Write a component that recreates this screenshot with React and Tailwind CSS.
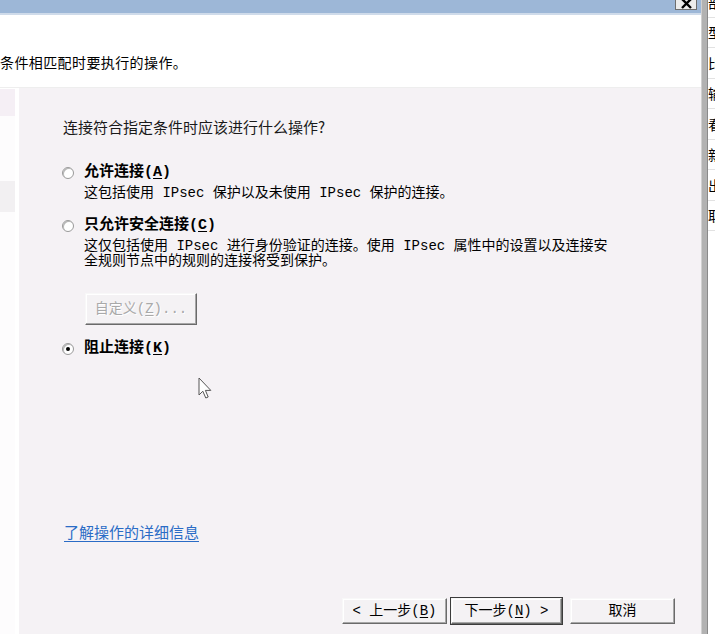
import React from "react";

const MONO = "font-['Liberation_Mono','Noto_Sans_CJK_SC',monospace]";
const SANS = "font-['Noto_Sans_CJK_SC','Noto_Sans',sans-serif]";

function Radio({ checked }) {
  return (
    <span className="mt-[4px] w-[12px] h-[12px] shrink-0 rounded-full bg-white border border-[#9a9a9a] shadow-[inset_1px_1px_0_#b8b8b8] flex items-center justify-center">
      {checked && <span className="w-[4px] h-[4px] rounded-full bg-black" />}
    </span>
  );
}

function Key({ k }) {
  return (
    <>
      (<span className="underline underline-offset-2">{k}</span>)
    </>
  );
}

function WinButton({ children, def, disabled, w }) {
  return (
    <div className={def ? "border border-[#3c3c3c]" : "border border-transparent"}>
      <div
        className={
          (w || "w-[105px]") +
          " h-[26px] flex items-center justify-center bg-[#f4f2f4] border border-t-[#f8f8f8] border-l-[#f8f8f8] border-b-[#6a6a6a] border-r-[#6a6a6a] shadow-[inset_-1px_-1px_0_#a7a7a7,inset_1px_1px_0_#ffffff] text-[14px] leading-[18px] whitespace-nowrap " +
          MONO +
          (disabled ? " text-[#a9a9a9] [text-shadow:1px_1px_0_#ffffff]" : " text-black")
        }
      >
        {children}
      </div>
    </div>
  );
}

export default function App() {
  const frags = ["部", "型", "比", "输", "看", "新", "出", "取"];
  return (
    <div className="w-[715px] h-[634px] overflow-hidden flex bg-white">
      {/* main window */}
      <div className="w-[701px] h-full flex flex-col">
        {/* title bar */}
        <div className="h-[13px] bg-[#9db7d7] border-b-2 border-[#cfdbea] box-content flex justify-end pr-[4px]">
          <div className="w-[22px] h-[10px] bg-[#ececec] border border-t-0 border-[#6e6e6e] flex justify-center overflow-hidden">
            <svg width="13" height="10" viewBox="0 0 13 10" className="-mt-[1px]">
              <path d="M2 0 L11 9 M11 0 L2 9" stroke="#000" strokeWidth="2.4" />
            </svg>
          </div>
        </div>
        {/* header */}
        <div className="h-[73px] shrink-0 bg-white border-b border-[#eeeeee] pt-[37px]">
          <p className={"text-[14px] leading-[20px] tracking-[0.4px] text-black whitespace-nowrap " + SANS}>
            条件相匹配时要执行的操作。
          </p>
        </div>
        {/* content */}
        <div className="flex-1 flex bg-white">
          {/* steps panel */}
          <div className="w-[15px] flex flex-col pt-[1px]">
            <div className="h-[27px] bg-[#f5eff5]" />
            <div className="h-[65px] bg-[#fdfcfd]" />
            <div className="h-[31px] bg-[#f2f0f2]" />
            <div className="flex-1 bg-[#fdfcfd]" />
          </div>
          <div className="w-[4px]" />
          {/* main panel */}
          <div className="flex-1 relative bg-[#f5f2f5] pl-[43px] pt-[29px] flex flex-col">
            <p className={"ml-[1px] text-[15px] leading-[20px] text-[#1a1a1a] whitespace-nowrap " + SANS}>
              连接符合指定条件时应该进行什么操作?
            </p>

            {/* option 1 */}
            <div className="mt-[26px] flex items-start gap-[10px]">
              <Radio />
              <div className="flex flex-col">
                <span className={"text-[15px] leading-[20px] font-bold text-black whitespace-nowrap " + MONO}>
                  允许连接<Key k="A" />
                </span>
                <span className={"mt-[1px] text-[14px] leading-[18px] text-black whitespace-nowrap " + MONO}>
                  这包括使用 IPsec 保护以及未使用 IPsec 保护的连接。
                </span>
              </div>
            </div>

            {/* option 2 */}
            <div className="mt-[14px] flex items-start gap-[10px]">
              <Radio />
              <div className="flex flex-col">
                <span className={"text-[15px] leading-[20px] font-bold text-black whitespace-nowrap " + MONO}>
                  只允许安全连接<Key k="C" />
                </span>
                <span className={"mt-[3px] text-[14px] leading-[15px] text-black whitespace-nowrap " + MONO}>
                  这仅包括使用 IPsec 进行身份验证的连接。使用 IPsec 属性中的设置以及连接安
                  <br />
                  全规则节点中的规则的连接将受到保护。
                </span>
                <div className="mt-[23px] flex">
                  <WinButton disabled w="w-[112px] h-[32px]">
                    自定义<Key k="Z" />...
                  </WinButton>
                </div>
              </div>
            </div>

            {/* option 3 */}
            <div className="mt-[13px] flex items-start gap-[10px]">
              <Radio checked />
              <span className={"text-[15px] leading-[20px] font-bold text-black whitespace-nowrap " + MONO}>
                阻止连接<Key k="K" />
              </span>
            </div>

            {/* link */}
            <a className={"mt-[163px] ml-[2px] self-start text-[15px] leading-[20px] text-[#2a6cc6] underline underline-offset-[3px] whitespace-nowrap " + SANS}>
              了解操作的详细信息
            </a>

            {/* bottom buttons */}
            <div className="mt-[55px] flex justify-end pr-[25px] items-center">
              <WinButton w="w-[105px]">&lt; 上一步<Key k="B" /></WinButton>
              <div className="w-[2px]" />
              <WinButton def w="w-[111px]">下一步<Key k="N" /> &gt;</WinButton>
              <div className="w-[6px]" />
              <WinButton w="w-[105px]">取消</WinButton>
            </div>

            {/* mouse cursor */}
            <svg className="absolute left-[179px] top-[289px]" width="14" height="24" viewBox="0 0 14 24">
              <path d="M1 1 L1 18 L4.8 14.2 L7.8 21 L10.2 20 L7.4 13.4 L12.8 13.4 Z" fill="#ffffff" stroke="#555555" strokeWidth="1" strokeLinejoin="miter" />
            </svg>
          </div>
        </div>
      </div>

      {/* window border */}
      <div className="w-[7px] h-full bg-[#b2b2b2] border-l border-l-[#d0d0d0] border-r border-r-[#8a8a8a]" />

      {/* background window fragments */}
      <div className="w-[7px] h-full overflow-hidden bg-white">
        <div className="-mt-[13px] flex flex-col">
          {frags.map((c, i) => (
            <div
              key={i}
              className={"h-[30.5px] shrink-0 border-b border-[#e2e2e2] flex items-center text-[14px] leading-[16px] text-black whitespace-nowrap " + SANS}
            >
              {c}
            </div>
          ))}
        </div>
      </div>
    </div>
  );
}
